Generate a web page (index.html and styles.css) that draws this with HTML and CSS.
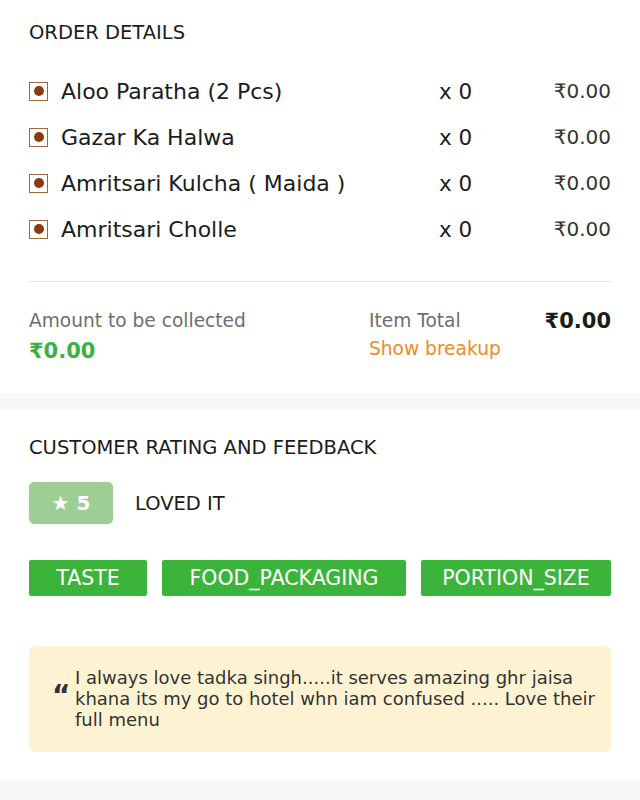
FILE: index.html
```html
<!DOCTYPE html>
<html>
<head>
<meta charset="utf-8">
<link rel="stylesheet" href="styles.css">
</head>
<body>
<section class="card order">
  <h2 class="title">ORDER DETAILS</h2>
  <ul class="items">
    <li class="item"><span class="veg"><span class="dot"></span></span><span class="name">Aloo Paratha (2 Pcs)</span><span class="qty">x 0</span><span class="price">₹0.00</span></li>
    <li class="item"><span class="veg"><span class="dot"></span></span><span class="name">Gazar Ka Halwa</span><span class="qty">x 0</span><span class="price">₹0.00</span></li>
    <li class="item"><span class="veg"><span class="dot"></span></span><span class="name">Amritsari Kulcha ( Maida )</span><span class="qty">x 0</span><span class="price">₹0.00</span></li>
    <li class="item"><span class="veg"><span class="dot"></span></span><span class="name">Amritsari Cholle</span><span class="qty">x 0</span><span class="price">₹0.00</span></li>
  </ul>
  <div class="summary">
    <div class="collect">
      <div class="label">Amount to be collected</div>
      <div class="amount">₹0.00</div>
    </div>
    <div class="total">
      <div class="label">Item Total</div>
      <div class="breakup">Show breakup</div>
    </div>
    <div class="total-amount">₹0.00</div>
  </div>
</section>
<div class="gap"></div>
<section class="card feedback">
  <h2 class="title">CUSTOMER RATING AND FEEDBACK</h2>
  <div class="rating">
    <span class="badge">★ 5</span>
    <span class="verdict">LOVED IT</span>
  </div>
  <div class="tags">
    <span class="tag tag-taste">TASTE</span>
    <span class="tag tag-pack">FOOD_PACKAGING</span>
    <span class="tag tag-portion">PORTION_SIZE</span>
  </div>
  <div class="comment">
    <span class="quote">“</span>
    <p class="text">I always love tadka singh.....it serves amazing ghr jaisa khana its my go to hotel whn iam confused ..... Love their full menu</p>
  </div>
</section>
<div class="gap bottom"></div>
</body>
</html>
```
FILE: styles.css
```css
* { box-sizing: border-box; }
html, body { margin: 0; padding: 0; }
body {
  width: 640px;
  background: #f7f7f7;
  font-family: "DejaVu Sans", "Liberation Sans", Arial, sans-serif;
  color: #1c1c1c;
}
.card { background: #fff; padding: 0 29px; }
.title {
  margin: 0;
  font-size: 19.5px;
  font-weight: 400;
  line-height: 22px;
  color: #1c1c1c;
}
.order { padding-top: 22px; height: 393px; }
.items { list-style: none; margin: 24px 0 0; padding: 0; }
.item {
  display: flex;
  align-items: center;
  height: 46px;
  font-size: 22px;
  color: #1c1c1c;
}
.veg {
  width: 19px; height: 19px;
  border: 1.5px solid #9a6a3a;
  display: flex; align-items: center; justify-content: center;
  margin-right: 13px;
  flex: none;
}
.dot { width: 10px; height: 10px; border-radius: 50%; background: #8b3a0e; }
.name { flex: 1; }
.qty { width: 112px; font-size: 21.5px; }
.price { width: 60px; text-align: right; color: #333; font-size: 20px; }
.summary {
  margin-top: 29px;
  border-top: 1px solid #e3e3e3;
  padding-top: 27px;
  display: grid;
  grid-template-columns: 340px 1fr auto;
  align-items: start;
}
.label { font-size: 18.6px; color: #6e6e6e; line-height: 24px; }
.amount { font-size: 21px; font-weight: 700; color: #3cb043; line-height: 30px; margin-top: 3px; }
.breakup { font-size: 18.6px; color: #f08a24; line-height: 30px; margin-top: 1px; }
.total-amount { font-size: 21px; font-weight: 700; color: #1c1c1c; line-height: 24px; }
.gap { height: 17px; background: #f7f7f7; }
.feedback { padding-top: 27px; height: 370px; }
.rating { display: flex; align-items: center; margin-top: 23px; }
.badge {
  width: 84px; height: 42px;
  background: #9fce94;
  border-radius: 5px;
  color: #fff;
  font-size: 20px;
  font-weight: 700;
  display: flex; align-items: center; justify-content: center;
}
.verdict { margin-left: 22px; font-size: 19.5px; color: #1c1c1c; }
.tags { display: flex; gap: 15px; margin-top: 36px; overflow: hidden; }
.tag {
  height: 36px;
  background: #3cb43c;
  border-radius: 2px;
  color: #fff;
  font-size: 20.5px;
  display: flex; align-items: center; justify-content: center;
  flex: none;
}
.tag-taste { width: 118px; }
.tag-pack { width: 244px; }
.tag-portion { width: 190px; }
.comment {
  margin-top: 50px;
  background: #fdf3d3;
  border-radius: 6px;
  padding: 21px 4px 22px 23px;
  display: flex;
  align-items: flex-start;
}
.quote {
  font-family: "DejaVu Sans", sans-serif;
  font-size: 28px;
  font-weight: 700;
  color: #333;
  width: 23px;
  line-height: 58px;
  flex: none;
}
.text { margin: 0; font-size: 18px; line-height: 21px; color: #333; }
.bottom { height: 20px; }
```
